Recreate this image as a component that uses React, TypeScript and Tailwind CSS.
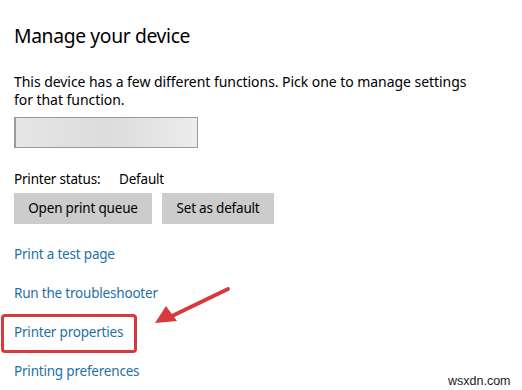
import React from "react"

const FONT = { fontFamily: '"Noto Sans", "Open Sans", Arial, sans-serif' }

const links = ["Print a test page", "Run the troubleshooter", "Printer properties", "Printing preferences"]

export default function App() {
  return (
    <div className="relative h-[390px] w-[522px] overflow-hidden bg-white pl-[14px] text-[#1a1a1a]" style={FONT}>
      <h1 className="pt-[22px] text-[19.3px] leading-[28px] font-normal tracking-[-0.35px] text-black">Manage your device</h1>

      <p className="mt-[23px] text-[14px] leading-[18px] tracking-[-0.05px] text-black">
        This device has a few different functions. Pick one to manage settings
        <br />
        for that function.
      </p>

      <div className="mt-[8px] h-[31px] w-[184px] border border-l-2 border-[#9a9a9a] bg-gradient-to-r from-[#e6e6e6] via-[#dcdcdc] to-[#ececec]" />

      <div className="mt-[21px] flex h-[20px] items-center text-[13.5px] tracking-[-0.2px] text-black">
        <span className="w-[105px]">Printer status:</span>
        <span>Default</span>
      </div>

      <div className="mt-[4px] flex gap-[10px]">
        <button className="h-[31px] w-[138px] bg-[#cccccc] text-[13.5px] tracking-[-0.2px] text-black">Open print queue</button>
        <button className="h-[31px] w-[112px] bg-[#cccccc] text-[13.5px] tracking-[-0.2px] text-black">Set as default</button>
      </div>

      <div className="mt-[20px] flex flex-col gap-[19px]">
        {links.map((l) => (
          <a key={l} className="block h-[20px] text-[13.5px] leading-[20px] tracking-[-0.2px] text-[#1f6fa8]">
            {l}
          </a>
        ))}
      </div>

      <div className="absolute left-[1px] top-[314px] h-[39px] w-[136px] rounded-[4px] border-[3px] border-[#d8393d]" />

      <svg className="absolute left-[150px] top-[284px]" width="85" height="45" viewBox="0 0 85 45">
        <line x1="78" y1="5" x2="20" y2="33" stroke="#d8393d" strokeWidth="4" strokeLinecap="round" />
        <polygon points="5,39 16,22 27,37" fill="#d8393d" />
      </svg>

      <div className="absolute left-[448px] top-[372px] text-[12.5px] text-[#222]" style={{ fontFamily: '"Liberation Sans", Arial, sans-serif' }}>
        wsxdn.com
      </div>
    </div>
  )
}
